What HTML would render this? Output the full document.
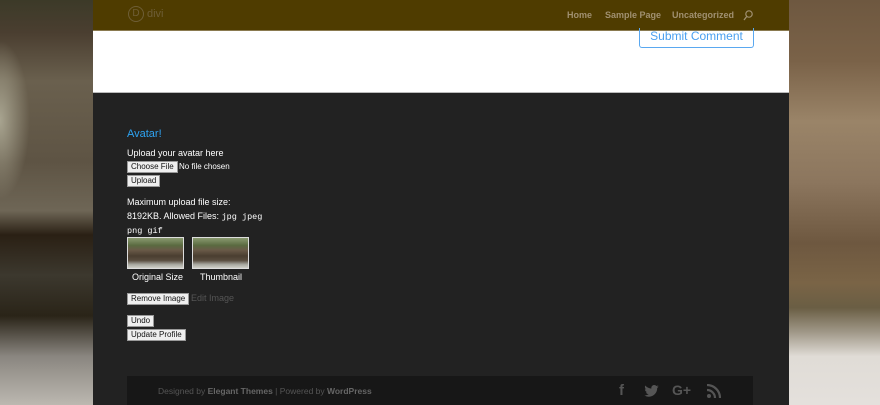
<!DOCTYPE html>
<html><head><style>
*{margin:0;padding:0;box-sizing:border-box}
body{width:880px;height:405px;overflow:hidden;position:relative;font-family:"Liberation Sans",sans-serif;background:#5a4a38}
.bgl{position:absolute;left:0;top:0;width:93px;height:405px;background:linear-gradient(180deg,#3c3a28 0%,#4a3e30 8%,#6a604e 20%,#5e5444 40%,#6e6656 52%,#2a2014 58%,#3c382e 68%,#2a2418 78%,#8a8680 88%,#bcb8b0 100%)}
.bgl2{position:absolute;left:0;top:40px;width:30px;height:160px;background:radial-gradient(ellipse at 0 50%,#a8a490,rgba(0,0,0,0) 70%)}
.bgr{position:absolute;left:789px;top:0;width:91px;height:405px;background:linear-gradient(180deg,#6e5840 0%,#7a6248 15%,#9a8468 30%,#8c765e 45%,#6e5840 60%,#7a6446 70%,#6a5e44 76%,#a09888 82%,#e0dcd6 88%,#e4e0dc 100%)}
.hdr{position:absolute;left:93px;top:0;width:696px;height:31px;background:#4f3c00;border-bottom:1px solid #8a7a50}
.logo{position:absolute;left:35px;top:6px;width:16px;height:16px;border:1px solid #6e5e36;border-radius:50%;color:#6e5e36;font-size:10px;text-align:center;line-height:14px}
.logot{position:absolute;left:54px;top:8px;color:#6e5e36;font-size:11px}
.nav{position:absolute;top:10px;font-size:9px;font-weight:bold;color:#a09070}
.white{position:absolute;left:93px;top:31px;width:696px;height:62px;background:#fff;border-bottom:1px solid #bbb}
.sub{position:absolute;left:546px;top:-3px;width:115px;height:20px;border:1px solid #5aa8f0;border-top:none;border-radius:0 0 3px 3px;color:#4aa0f0;font-size:12px;text-align:center;line-height:16px}
.dark{position:absolute;left:93px;top:93px;width:696px;height:312px;background:#222}
.c{position:absolute;color:#fff;font-size:9px}
.btn{position:absolute;background:#efefef;border:1px solid #999;color:#111;font-size:8px;line-height:10px;padding:0 3px;height:12px}
.mono{font-family:"Liberation Mono",monospace;font-size:8.5px}
.img{position:absolute;width:57px;height:32px;background:linear-gradient(180deg,#8a9a70 0%,#5a6a40 25%,#6a5a48 40%,#4a3e30 60%,#5a4e40 75%,#a8a8a0 88%,#d0d0c8 100%);border:1px solid #ddd}
.foot{position:absolute;left:127px;top:376px;width:626px;height:29px;background:#171717}
</style></head><body>
<div class="bgl"></div><div class="bgl2"></div><div class="bgr"></div>
<div class="hdr">
<div class="logo">D</div><div class="logot">divi</div>
<div class="nav" style="left:474px">Home</div>
<div class="nav" style="left:512px">Sample Page</div>
<div class="nav" style="left:579px">Uncategorized</div>
<svg style="position:absolute;left:650px;top:10px" width="10" height="11" viewBox="0 0 10 11"><circle cx="6" cy="4" r="3.2" stroke="#a09070" stroke-width="1.2" fill="none"/><path d="M3.7 6.5L1 10" stroke="#a09070" stroke-width="1.3"/></svg>
</div>
<div class="white"><div class="sub">Submit Comment</div></div>
<div class="dark"></div>
<div class="c" style="left:127px;top:128px;font-size:11px;color:#2ea3f2">Avatar!</div>
<div class="c" style="left:127px;top:148px">Upload your avatar here</div>
<div class="btn" style="left:127px;top:161px">Choose File</div>
<div class="c" style="left:179px;top:162px;font-size:8px">No file chosen</div>
<div class="btn" style="left:127px;top:175px">Upload</div>
<div class="c" style="left:127px;top:197px">Maximum upload file size:</div>
<div class="c" style="left:127px;top:211px">8192KB. Allowed Files: <span class="mono">jpg jpeg</span></div>
<div class="c mono" style="left:127px;top:226px">png gif</div>
<div class="img" style="left:127px;top:237px"></div>
<div class="img" style="left:192px;top:237px"></div>
<div class="c" style="left:132px;top:272px">Original Size</div>
<div class="c" style="left:200px;top:272px">Thumbnail</div>
<div class="btn" style="left:127px;top:293px">Remove Image</div>
<div class="c" style="left:191px;top:293px;color:#555">Edit Image</div>
<div class="btn" style="left:127px;top:315px">Undo</div>
<div class="btn" style="left:127px;top:329px">Update Profile</div>
<div class="foot">
<div style="position:absolute;left:31px;top:10px;font-size:8.5px;color:#555">Designed by <b style="color:#666">Elegant Themes</b> | Powered by <b style="color:#666">WordPress</b></div>
<div style="position:absolute;left:492px;top:6px;font-size:15px;font-weight:bold;color:#555">f</div>
<svg style="position:absolute;left:517px;top:9px" width="15" height="12" viewBox="0 0 24 20"><path d="M24 2.4c-.9.4-1.8.7-2.8.8 1-.6 1.8-1.6 2.2-2.7-1 .6-2 1-3.1 1.2C19.3.7 18 0 16.6 0c-2.7 0-4.9 2.2-4.9 4.9 0 .4 0 .8.1 1.1C7.7 5.8 4.1 3.9 1.7.9c-.4.7-.7 1.6-.7 2.5 0 1.7.9 3.2 2.2 4.1-.8 0-1.6-.2-2.2-.6v.1c0 2.4 1.7 4.4 3.9 4.8-.4.1-.8.2-1.3.2-.3 0-.6 0-.9-.1.6 2 2.4 3.4 4.6 3.4-1.7 1.3-3.8 2.1-6.1 2.1-.4 0-.8 0-1.2-.1 2.2 1.4 4.8 2.2 7.5 2.2 9.1 0 14-7.5 14-14v-.6c1-.7 1.8-1.6 2.5-2.5z" fill="#555"/></svg>
<div style="position:absolute;left:545px;top:6px;font-size:14px;font-weight:bold;color:#555">G+</div>
<svg style="position:absolute;left:580px;top:8px" width="14" height="14" viewBox="0 0 14 14"><circle cx="2" cy="12" r="2" fill="#555"/><path d="M0 6a8 8 0 0 1 8 8M0 1a13 13 0 0 1 13 13" stroke="#555" stroke-width="2.2" fill="none"/></svg>
</div>
</body></html>
